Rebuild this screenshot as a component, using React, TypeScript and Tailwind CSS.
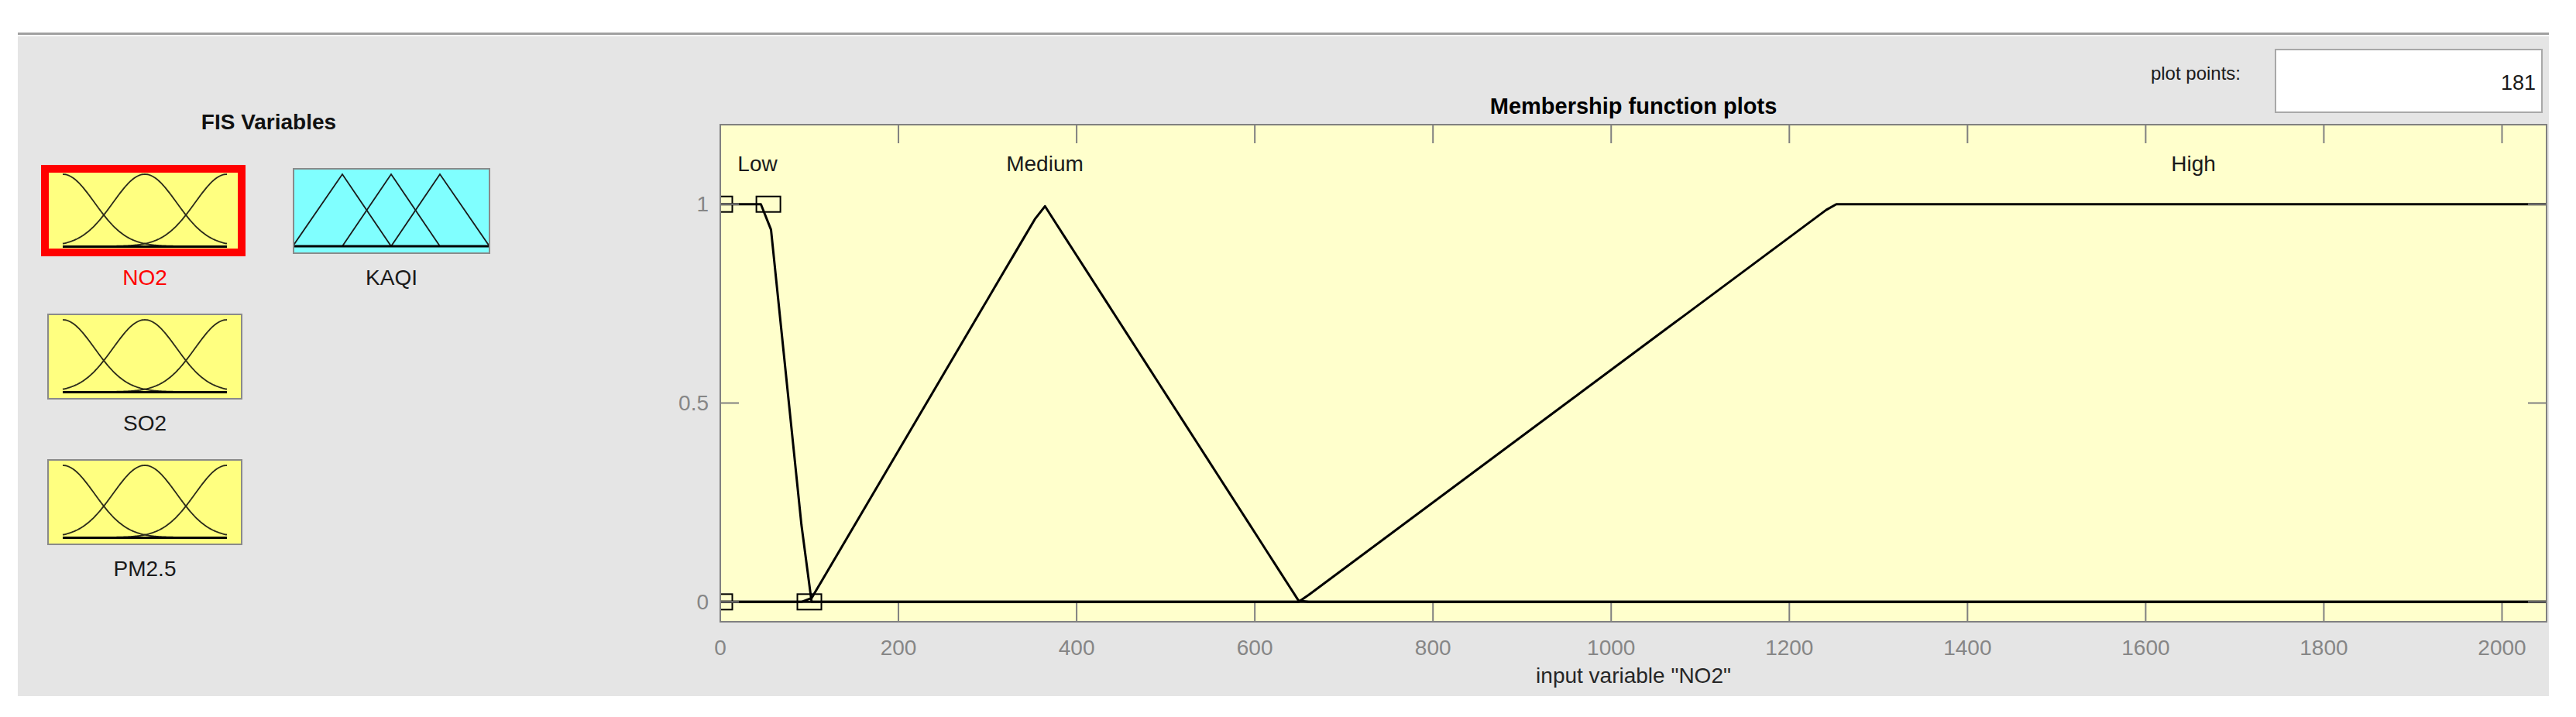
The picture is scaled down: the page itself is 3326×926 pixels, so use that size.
import React from "react";

const XMAX = 2050;
const PX0 = 930;
const PX1 = 3288;
const PY0 = 161;
const PY1 = 803;
const xs = (v: number) => PX0 + (v * (PX1 - PX0)) / XMAX;
const ys = (m: number) => PY1 - ((m + 0.05) * (PY1 - PY0)) / 1.25;

type F = (x: number) => number;
const trap = (a: number, b: number, c: number, d: number): F => (x: number) => {
  const l = a === b ? (x >= a ? 1 : 0) : (x - a) / (b - a);
  const r = c === d ? (x <= d ? 1 : 0) : (d - x) / (d - c);
  return Math.max(0, Math.min(l, 1, r));
};
const tri = (a: number, b: number, c: number) => trap(a, b, b, c);

const N = 181;
const samplePts = (f: F) =>
  Array.from({ length: N }, (_, i) => {
    const v = (i * XMAX) / (N - 1);
    return `${xs(v).toFixed(2)},${ys(f(v)).toFixed(2)}`;
  }).join(" ");

const mfs: F[] = [trap(0, 0, 54, 100), tri(100, 363, 650), trap(650, 1250, 2050, 2050)];

function GaussIcon({ viewBox }: { viewBox: string }) {
  const cs = [20, 126, 232];
  const sig = 41;
  const paths = cs.map((c) => {
    let d = "";
    for (let x = 20; x <= 232; x += 1) {
      const y = 101 - 93 * Math.exp(-((x - c) ** 2) / (2 * sig * sig));
      d += (d ? " L" : "M") + x.toFixed(1) + " " + y.toFixed(2);
    }
    return d;
  });
  return (
    <svg viewBox={viewBox} className="block w-full h-full" preserveAspectRatio="none">
      {paths.map((d, i) => (
        <path key={i} d={d} fill="none" stroke="#2a2a1a" strokeWidth="1.8" />
      ))}
      <line x1="20" y1="101.5" x2="232" y2="101.5" stroke="#000" strokeWidth="3" />
    </svg>
  );
}

function TriIcon() {
  const tris = [
    [0, 64, 127],
    [64, 127, 190],
    [127, 190, 254],
  ];
  return (
    <svg viewBox="2 2 251 107" className="block w-full h-full" preserveAspectRatio="none">
      {tris.map(([a, b, c], i) => (
        <polyline key={i} points={`${a},101 ${b},8 ${c},101`} fill="none" stroke="#1a1a1a" strokeWidth="1.8" />
      ))}
      <line x1="0" y1="101" x2="255" y2="101" stroke="#000" strokeWidth="3" />
    </svg>
  );
}

function VarCell({ label, selected, kind }: { label: string; selected?: boolean; kind: "gauss" | "tri" }) {
  return (
    <div className="flex flex-col items-center">
      {selected ? (
        <div className="w-[264px] h-[118px] ml-[-8px] mr-[-4px] mt-[-4px] mb-[-3px] border-[10px] border-[#ff0000] bg-[#ffff80]">
          <GaussIcon viewBox="2 6 244 98" />
        </div>
      ) : kind === "gauss" ? (
        <div className="w-[252px] h-[111px] border-2 border-[#8a8a8a] bg-[#ffff80]">
          <GaussIcon viewBox="2 2 248 107" />
        </div>
      ) : (
        <div className="w-[255px] h-[111px] border-2 border-[#8a8a8a] bg-[#80ffff]">
          <TriIcon />
        </div>
      )}
      <div
        className={`mt-[15px] h-[32px] leading-[32px] text-[28px] ${
          selected ? "text-[#ff0000]" : "text-[#1a1a1a]"
        }`}
      >
        {label}
      </div>
    </div>
  );
}

function Chart() {
  const xticks = [0, 200, 400, 600, 800, 1000, 1200, 1400, 1600, 1800, 2000];
  const yticks = [
    { v: 0, t: "0" },
    { v: 0.5, t: "0.5" },
    { v: 1, t: "1" },
  ];
  const markers: [number, number][] = [
    [0, 0],
    [0, 1],
    [54, 1],
    [100, 0],
  ];
  const font = '"Liberation Sans", Arial, sans-serif';
  return (
    <svg viewBox="860 153 2432 746" className="block w-[2432px] h-[746px]">
      <defs>
        <clipPath id="plotclip">
          <rect x={PX0} y={PY0} width={PX1 - PX0} height={PY1 - PY0} />
        </clipPath>
      </defs>
      <rect x={PX0} y={PY0} width={PX1 - PX0} height={PY1 - PY0} fill="#ffffcc" />
      <g clipPath="url(#plotclip)">
        {mfs.map((f, i) => (
          <polyline
            key={i}
            points={samplePts(f)}
            fill="none"
            stroke="#000"
            strokeWidth="3"
            strokeLinejoin="round"
          />
        ))}
        {markers.map(([v, m], i) => (
          <rect
            key={i}
            x={xs(v) - 15.5}
            y={ys(m) - 10}
            width="31"
            height="20"
            fill="none"
            stroke="#000"
            strokeWidth="2"
          />
        ))}
      </g>
      {xticks.map((v) => (
        <g key={v}>
          <line x1={xs(v)} y1={PY0} x2={xs(v)} y2={PY0 + 24} stroke="#808080" strokeWidth="2" />
          <line x1={xs(v)} y1={PY1} x2={xs(v)} y2={PY1 - 24} stroke="#808080" strokeWidth="2" />
          <text
            x={xs(v)}
            y={836}
            textAnchor="middle"
            dominantBaseline="central"
            fontFamily={font}
            fontSize="28"
            fill="#868686"
          >
            {v}
          </text>
        </g>
      ))}
      {yticks.map(({ v, t }) => (
        <g key={t}>
          <line x1={PX0} y1={ys(v)} x2={PX0 + 24} y2={ys(v)} stroke="#808080" strokeWidth="2" />
          <line x1={PX1} y1={ys(v)} x2={PX1 - 24} y2={ys(v)} stroke="#808080" strokeWidth="2" />
          <text
            x={915}
            y={ys(v)}
            textAnchor="end"
            dominantBaseline="central"
            fontFamily={font}
            fontSize="28"
            fill="#868686"
          >
            {t}
          </text>
        </g>
      ))}
      <rect
        x={PX0}
        y={PY0}
        width={PX1 - PX0}
        height={PY1 - PY0}
        fill="none"
        stroke="#808080"
        strokeWidth="2"
      />
      {[
        { x: 978, t: "Low" },
        { x: 1349, t: "Medium" },
        { x: 2832, t: "High" },
      ].map((l) => (
        <text
          key={l.t}
          x={l.x}
          y={211}
          textAnchor="middle"
          dominantBaseline="central"
          fontFamily={font}
          fontSize="28"
          fill="#1a1a1a"
        >
          {l.t}
        </text>
      ))}
      <text
        x={(PX0 + PX1) / 2}
        y={872}
        textAnchor="middle"
        dominantBaseline="central"
        fontFamily={font}
        fontSize="28"
        fill="#262626"
      >
        input variable "NO2"
      </text>
    </svg>
  );
}

export default function App() {
  return (
    <div className="w-[3326px] h-[926px] bg-white pt-[42px] font-['Liberation_Sans',Arial,sans-serif] text-[#1a1a1a]">
      <div className="ml-[23px] w-[3268px] h-[857px] border-t-[3px] border-[#a0a0a0] bg-[#e5e5e5]">
        <div className="h-full border-t-2 border-[#f7f7f7] flex">
          {/* Left: FIS variables */}
          <div className="w-[837px] pt-[95px] pl-[38px]">
            <div className="w-fit flex flex-col items-center">
              <div className="h-[32px] leading-[32px] text-[28px] font-bold text-[#111]">FIS Variables</div>
              <div className="mt-[43px] grid grid-cols-[252px_255px] gap-x-[65px] gap-y-[30px]">
                <VarCell label="NO2" selected kind="gauss" />
                <VarCell label="KAQI" kind="tri" />
                <VarCell label="SO2" kind="gauss" />
                <div />
                <VarCell label="PM2.5" kind="gauss" />
                <div />
              </div>
            </div>
          </div>
          {/* Right: membership function plots */}
          <div className="w-[2431px] pt-[16px] flex flex-col">
            <div className="h-[83px] flex justify-end items-start pr-[8px]">
              <div className="mt-[19px] mr-[44px] text-[24px] leading-[26px] text-[#1a1a1a]">plot points:</div>
              <div className="w-[346px] h-[83px] border-2 border-[#a8a8a8] bg-white flex items-center justify-end pr-[7px] pt-[5px] text-[27px] text-[#1a1a1a]">
                181
              </div>
            </div>
            <div className="-mt-[25px] ml-[70px] mr-[3px] h-[32px] leading-[32px] text-center text-[29px] font-bold text-black">
              Membership function plots
            </div>
            <Chart />
          </div>
        </div>
      </div>
    </div>
  );
}
